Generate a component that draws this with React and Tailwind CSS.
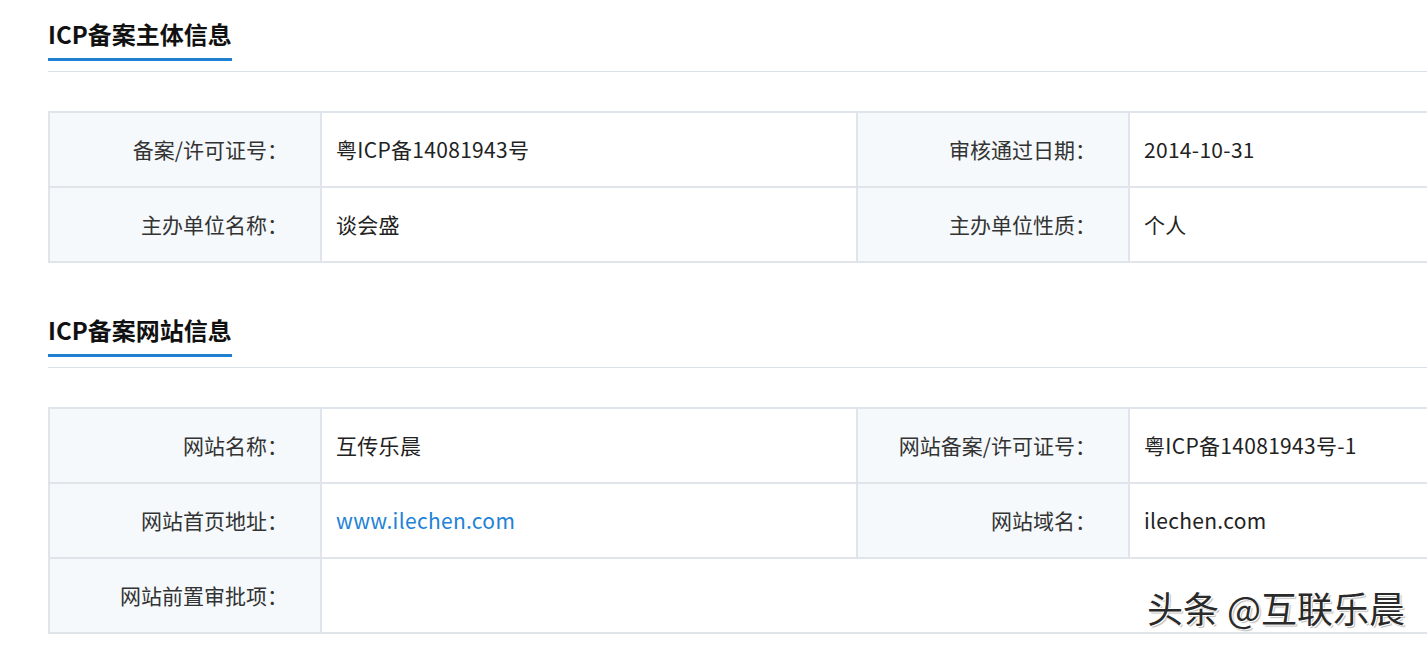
import React from "react";

const FONT = { fontFamily: '"Noto Sans CJK SC", "Noto Sans", sans-serif' };

const subjectRows = [
  [
    { label: "备案/许可证号：", value: "粤ICP备14081943号" },
    { label: "审核通过日期：", value: "2014-10-31" },
  ],
  [
    { label: "主办单位名称：", value: "谈会盛" },
    { label: "主办单位性质：", value: "个人" },
  ],
];

const siteRows = [
  [
    { label: "网站名称：", value: "互传乐晨" },
    { label: "网站备案/许可证号：", value: "粤ICP备14081943号-1" },
  ],
  [
    { label: "网站首页地址：", value: "www.ilechen.com", link: true },
    { label: "网站域名：", value: "ilechen.com" },
  ],
];

const SectionTitle = ({ children }) => (
  <div>
    <div className="inline-block border-b-[3px] border-[#1f80d2] pb-[8px] text-[24px] font-bold leading-[32px] text-[#111]">
      {children}
    </div>
    <div className="mt-[10px] h-px w-full bg-[#d9e2e8]"></div>
  </div>
);

const LabelCell = ({ children }) => (
  <td className="h-[75px] w-[272px] border-2 border-[#dfe5ea] bg-[#f5f9fc] pr-[32px] text-right align-middle text-[21px] text-[#333]">
    {children}
  </td>
);

const ValueCell = ({ children, link, span }) => (
  <td
    colSpan={span}
    className={`h-[75px] border-2 border-[#dfe5ea] bg-white pl-[14px] align-middle text-[21px] tracking-[0.3px] ${
      link ? "text-[#2282d6]" : "text-[#222]"
    }`}
  >
    {children}
  </td>
);

const InfoTable = ({ rows, extra }) => (
  <table className="w-[1400px] table-fixed border-collapse border-l border-[#dfe5ea]">
    <colgroup>
      <col className="w-[272px]" />
      <col className="w-[536px]" />
      <col className="w-[272px]" />
      <col />
    </colgroup>
    <tbody>
      {rows.map((row, i) => (
        <tr key={i}>
          {row.map((cell, j) => (
            <React.Fragment key={j}>
              <LabelCell>{cell.label}</LabelCell>
              <ValueCell link={cell.link}>{cell.value}</ValueCell>
            </React.Fragment>
          ))}
        </tr>
      ))}
      {extra && (
        <tr>
          <LabelCell>{extra}</LabelCell>
          <ValueCell span={3}></ValueCell>
        </tr>
      )}
    </tbody>
  </table>
);

export default function App() {
  return (
    <div
      className="relative h-[649px] w-[1427px] overflow-hidden bg-white pl-[48px] pt-[18px]"
      style={FONT}
    >
      <SectionTitle>ICP备案主体信息</SectionTitle>
      <div className="mt-[39px]">
        <InfoTable rows={subjectRows} />
      </div>

      <div className="mt-[51px]">
        <SectionTitle>ICP备案网站信息</SectionTitle>
      </div>
      <div className="mt-[39px]">
        <InfoTable rows={siteRows} extra="网站前置审批项：" />
      </div>

      <div className="absolute right-[22px] top-[584px] text-[36px] leading-[46px] text-[#2a2a2a] [text-shadow:1px_1px_0_#fff,-1px_-1px_0_#fff,2px_2px_1px_#bbb]">
        头条 @互联乐晨
      </div>
    </div>
  );
}
